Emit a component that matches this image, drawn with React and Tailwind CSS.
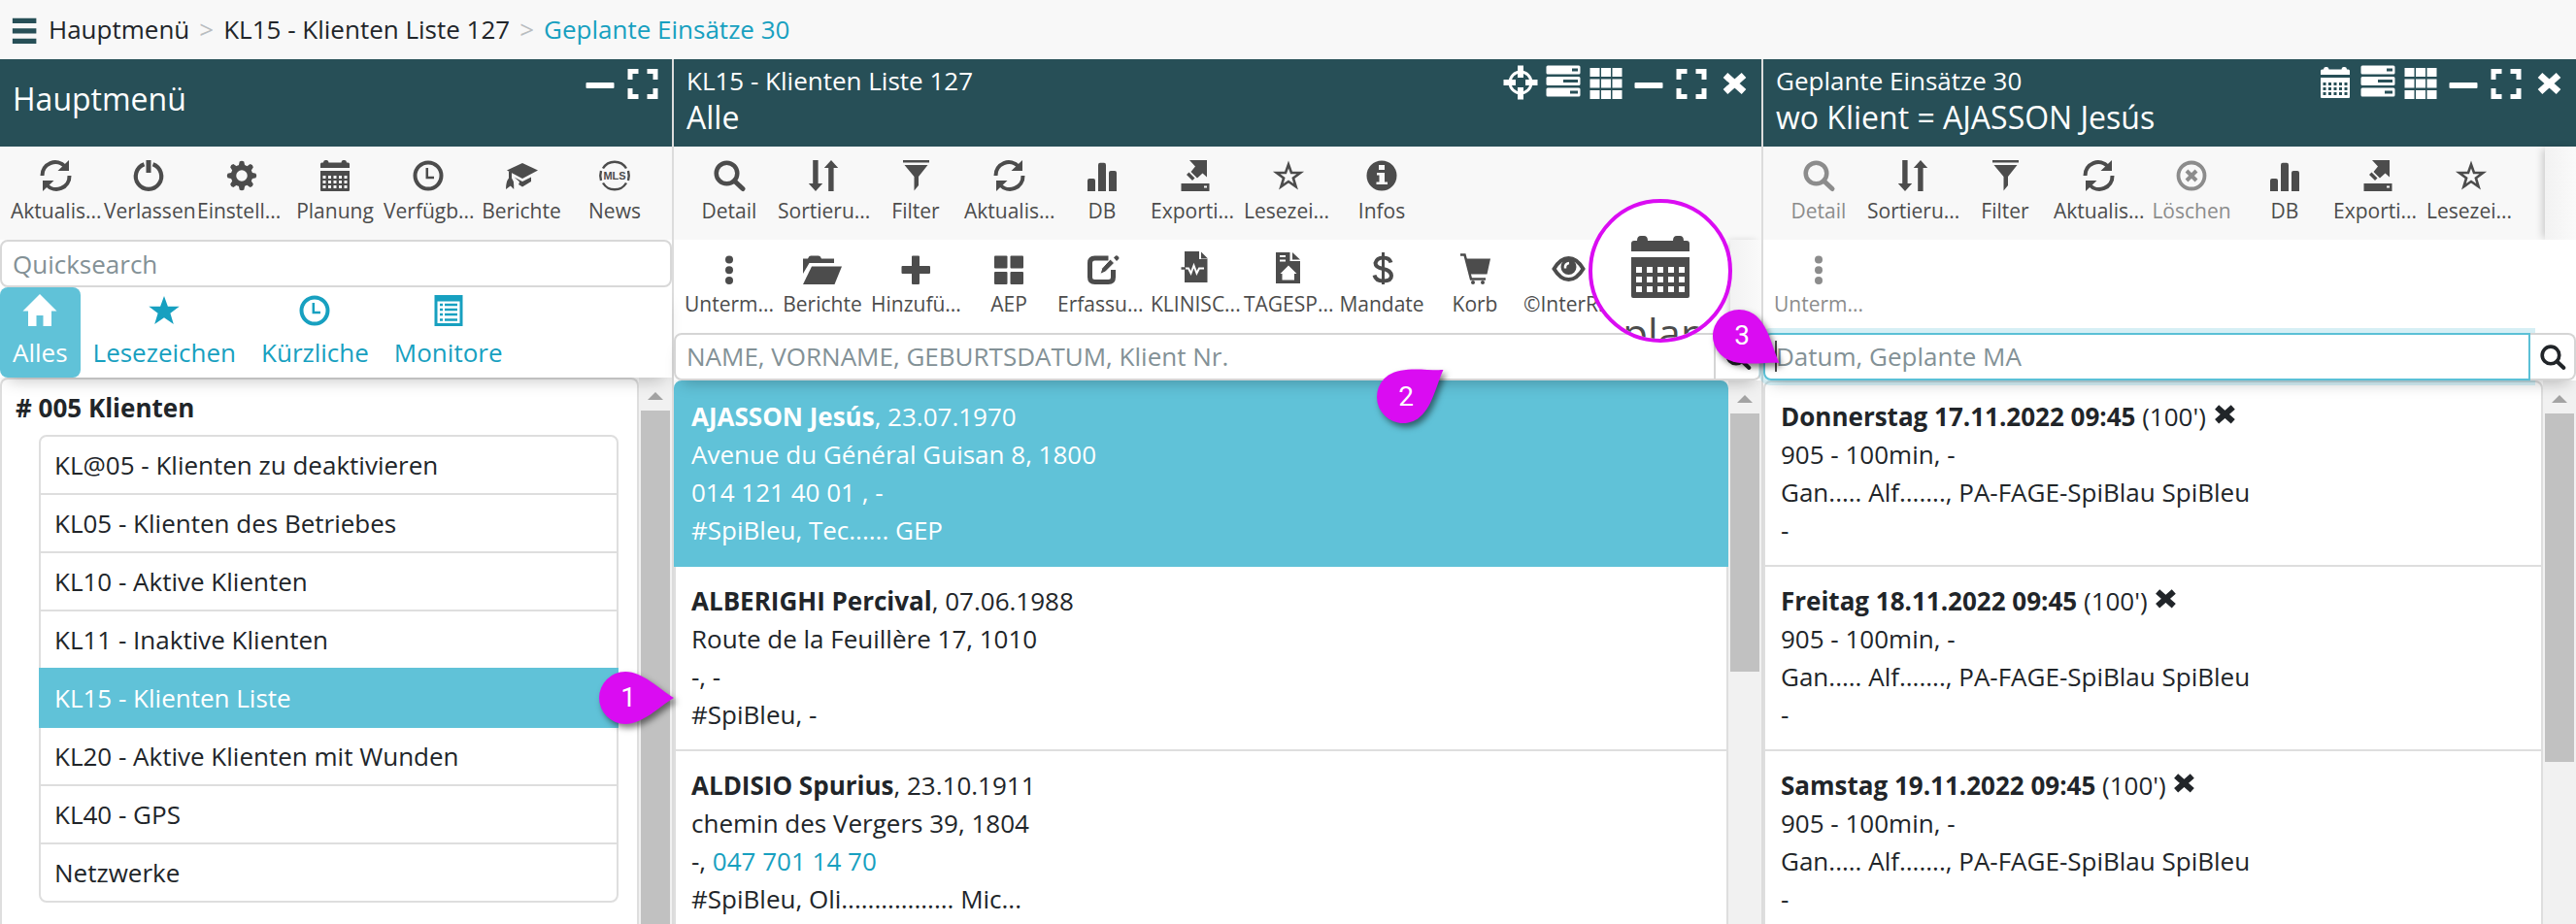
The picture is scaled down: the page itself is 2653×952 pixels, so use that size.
import React from 'react';
import clsx from 'clsx';

// All icons are drawn on the same 32x32 grid and use the current text color
const Icon = ({ className = 'size-8', children }) => (
    <svg
        viewBox="0 0 32 32"
        className={clsx('shrink-0 overflow-visible', className)}
        fill="currentColor"
        aria-hidden="true"
    >
        {children}
    </svg>
);

const RefreshIcon = () => (
    <Icon>
        <path d="M2.5 16A13.5 13.5 0 0 1 26 6.5" fill="none" stroke="currentColor" strokeWidth="4" />
        <path d="M30.5 16A13.5 13.5 0 0 1 7 25.5" fill="none" stroke="currentColor" strokeWidth="4" />
        <path d="M30 0v11H18.5z" />
        <path d="M3 32V21h11.5z" />
    </Icon>
);

const PowerIcon = () => (
    <Icon>
        <path d="M11.5 4.2A13.2 13.2 0 1 0 20.5 4.2" fill="none" stroke="currentColor" strokeWidth="4.2" />
        <path d="M13.5 0h5v13h-5z" />
    </Icon>
);

const GearIcon = () => (
    <Icon>
        <circle cx="16" cy="16" r="8.5" fill="none" stroke="currentColor" strokeWidth="5.5" />
        {[0, 45, 90, 135, 180, 225, 270, 315].map((angle) => (
            <path key={angle} d="M12.5 7l1.2-5.5q2.3-1.5 4.6 0L19.5 7z" transform={`rotate(${angle} 16 16)`} />
        ))}
    </Icon>
);

const CalendarIcon = ({ className }) => (
    <Icon className={className}>
        <path d="M1 8V4q0-1.5 1.5-1.5H4Q4 0 6 0h1.5q2 0 2 2.5h13Q22.5 0 24.5 0H26q2 0 2 2.5h1.5Q31 2.5 31 4v4z" />
        <path
            fillRule="evenodd"
            d="M1 11h30v20q0 1-1 1H2q-1 0-1-1zM3.5 16v3h3v-3zM9 16v3h3v-3zM14.5 16v3h3v-3zM20 16v3h3v-3zM25.5 16v3h3v-3zM3.5 21v3h3v-3zM9 21v3h3v-3zM14.5 21v3h3v-3zM20 21v3h3v-3zM25.5 21v3h3v-3zM3.5 26v3h3v-3zM9 26v3h3v-3zM14.5 26v3h3v-3zM20 26v3h3v-3zM25.5 26v3h3v-3z"
        />
    </Icon>
);

const ClockIcon = () => (
    <Icon>
        <circle cx="16" cy="16" r="13.5" fill="none" stroke="currentColor" strokeWidth="4" />
        <path d="M14.8 8v10H22" fill="none" stroke="currentColor" strokeWidth="2.5" />
    </Icon>
);

const GraduationIcon = () => (
    <Icon>
        <path d="M17 3l16 7.5L17 19 1 10.5z" />
        <path d="M8.5 17.5l8.5 4.5 9-4.5V22l-9 5.5-4-2.5q2-2.5-.5-4z" />
        <path d="M3 12h3v6.5q2.5 3 2.2 7.5v4l-3.4-3.5L0 30q0-8 3-11.5z" />
    </Icon>
);

const MlsIcon = () => (
    <Icon>
        <path
            d="M4 8.5A14 14 0 0 1 28 8.5M28 23.5A14 14 0 0 1 4 23.5M2 11q-1.5 5 0 10M30 11q1.5 5 0 10"
            fill="none"
            stroke="currentColor"
            strokeWidth="2.4"
        />
        <text x="16" y="20" textAnchor="middle" className="font-['Liberation_Sans'] text-[11px] font-bold">MLS</text>
    </Icon>
);

const SearchIcon = ({ className }) => (
    <Icon className={className}>
        <circle cx="13.5" cy="13.5" r="10.8" fill="none" stroke="currentColor" strokeWidth="4.5" />
        <path d="M21.5 21.5l8.5 8" stroke="currentColor" strokeWidth="5" strokeLinecap="round" />
    </Icon>
);

const SortIcon = () => (
    <Icon>
        <path d="M6.2 0h5.4v24h4.6L9 32l-7.2-8h4.4z" />
        <path d="M22.2 32h5.4V8h4.6L25 0l-7.2 8h4.4z" />
    </Icon>
);

const FilterIcon = () => (
    <Icon>
        <path d="M3 0h27v2.6H3zM4.5 5h24L19 17v9l-4.5 5.5V17z" />
    </Icon>
);

const BarsIcon = () => (
    <Icon>
        <path d="M1 32V21q0-2 2-2h4q2 0 2 2v11zM12 32V5q0-2.3 2-2.3h4q2 0 2 2.3v27zM23 32V13q0-2 2-2h4q2 0 2 2v19z" />
    </Icon>
);

const ExportIcon = () => (
    <Icon>
        <path fillRule="evenodd" d="M1.5 24h29v8h-29zM25 26.5v2h3v-2z" />
        <path d="M10 0h18v17.5l-4.5-4-5.5 5-6.5-6.5L16 6.5z" />
        <path d="M9.5 12.5l6 6-2.5 2.5-6-6z" />
    </Icon>
);

const StarOutlineIcon = () => (
    <Icon>
        <path
            d="M16 4.5l3 8.5h9.2l-7.3 5.5 2.7 8.8L16 22l-7.6 5.3 2.7-8.8L3.8 13H13z"
            fill="none"
            stroke="currentColor"
            strokeWidth="2.6"
        />
    </Icon>
);

const StarIcon = () => (
    <Icon>
        <path d="M16 1l3.9 10.8h11.8l-9.3 7L25.8 30 16 23.2 6.2 30l3.4-11.2-9.3-7h11.8z" />
    </Icon>
);

const InfoIcon = () => (
    <Icon>
        <circle cx="16" cy="16" r="15.5" />
        <path d="M13 5h6v5h-6zM11 13h8v9.5h3V25H10.5v-2.5h3v-7H11z" className="fill-[#f8f8f8]" />
    </Icon>
);

const DeleteIcon = () => (
    <Icon>
        <circle cx="16" cy="16" r="13.5" fill="none" stroke="currentColor" strokeWidth="3.8" />
        <path d="M11 11l10 10M21 11L11 21" stroke="currentColor" strokeWidth="4" />
    </Icon>
);

const DotsIcon = () => (
    <Icon>
        <circle cx="16" cy="6.5" r="4" />
        <circle cx="16" cy="17.3" r="4" />
        <circle cx="16" cy="28" r="4" />
    </Icon>
);

const FolderIcon = () => (
    <Icon>
        <path d="M-4 21V5.5h5Q2 2.5 4 2.5h8q2 0 3 3h13V10H2.5z" />
        <path d="M5 13.5h31L28.5 32H-4z" />
    </Icon>
);

const PlusIcon = () => (
    <Icon>
        <path d="M12 3.5q0-1 1-1h6q1 0 1 1V13h10q1 0 1 1v6q0 1-1 1H20v10q0 1-1 1h-6q-1 0-1-1V21H2.5q-1 0-1-1v-6q0-1 1-1H12z" />
    </Icon>
);

const TilesIcon = () => (
    <Icon>
        <rect x="1" y="2.5" width="13.5" height="13" rx="1" />
        <rect x="17.5" y="2.5" width="13.5" height="13" rx="1" />
        <rect x="1" y="19" width="13.5" height="13" rx="1" />
        <rect x="17.5" y="19" width="13.5" height="13" rx="1" />
    </Icon>
);

const EditIcon = () => (
    <Icon>
        <path d="M22.5 5H8.5Q3.5 5 3.5 10v14.5q0 5 5 5h14q5 0 5-5V17" fill="none" stroke="currentColor" strokeWidth="5" />
        <path d="M24.5 6l4 4-9 9-5.5 2.5 1.8-6z" stroke="#fff" strokeWidth="1" />
        <path d="M28 4.5l2-2q1-.8 2.2.2l1 1.2q.8 1-.2 2l-2 2z" />
    </Icon>
);

const PulseFileIcon = () => (
    <Icon>
        <path d="M5-2h15v8h8.5v24H5z" />
        <path d="M22-1.5L29 5.5h-7z" />
        <path d="M1.5 15.5H9l2.5 5 3-8 3 8 2.5-5h5" fill="none" stroke="#fff" strokeWidth="2" />
        <path d="M1.5 15.5H6" stroke="currentColor" strokeWidth="2.5" />
    </Icon>
);

const HomeFileIcon = () => (
    <Icon>
        <path d="M3-1h14.5v9H28v23H3z" />
        <path d="M20-1l8 7.5h-8z" />
        <path d="M7 3h6M7 7.5h6" stroke="#fff" strokeWidth="2" />
        <path d="M16 12.5L24.5 21H22v6.5H9.5V21H7.5z" fill="#fff" />
    </Icon>
);

const DollarIcon = () => (
    <Icon>
        <path
            d="M25.5 9.5Q24 4.5 17.5 4.5T9.5 10q0 4.5 8 6t8.500 7q0 5.500-8.500 5.500-7.500 0-9-6"
            fill="none"
            stroke="currentColor"
            strokeWidth="4"
        />
        <path d="M17.5-1v33" stroke="currentColor" strokeWidth="3" />
    </Icon>
);

const CartIcon = () => (
    <Icon>
        <path d="M1 1.5h4.5L12 26.5h15" fill="none" stroke="currentColor" strokeWidth="2.5" />
        <path d="M6.5 5.5H32l-3.5 16H11z" />
        <circle cx="14" cy="30" r="2" />
        <circle cx="24" cy="30" r="2" />
    </Icon>
);

const EyeIcon = () => (
    <Icon>
        <path
            d="M1.5 16Q8 5 16.5 5t15 11Q25 27 16.5 27T1.5 16z"
            fill="none"
            stroke="currentColor"
            strokeWidth="4"
        />
        <circle cx="16.5" cy="14" r="8" />
        <path d="M17 10q-4.5.5-4 5.5" fill="none" stroke="#fff" strokeWidth="2.5" />
    </Icon>
);

const HomeIcon = () => (
    <Icon>
        <path d="M16-1l17.5 17.5H28V32h-8.5V21h-7v11H4V16.5H-1.5z" />
    </Icon>
);

const ListIcon = () => (
    <Icon>
        <path fillRule="evenodd" d="M1.5 0h29v32h-29zM4.5 6.5v22.5h23V6.5z" />
        <path d="M7 10h3M12 10h13M7 15h3M12 15h13M7 20h3M12 20h13M7 25.5h3M12 25.5h13" stroke="currentColor" strokeWidth="2.5" />
    </Icon>
);

const MenuIcon = () => (
    <Icon className="size-7">
        <path d="M1 2h28v6H1zM1 14h28v6H1zM1 26h28v6H1z" />
    </Icon>
);

const TargetIcon = () => (
    <Icon>
        <circle cx="16" cy="16" r="11" fill="none" stroke="currentColor" strokeWidth="3" />
        <path d="M13-1.5h6V11h-6zM13 21h6v12.5h-6zM-1.5 13H11v6H-1.5zM21 13h12.5v6H21z" />
    </Icon>
);

const ServerIcon = () => (
    <Icon>
        <path
            fillRule="evenodd"
            d="M0-1.5h32q1.5 0 1.5 1.5v6q0 1.5-1.5 1.5H0Q-1.5 7.5-1.5 6V0Q-1.5-1.5 0-1.5zM25 1.5v3h6v-3zM0 10h32q1.5 0 1.5 1.5v6q0 1.5-1.5 1.5H0q-1.5 0-1.5-1.5v-6Q-1.5 10 0 10zM16 13v3h15v-3zM0 21.5h32q1.5 0 1.5 1.5v6q0 1.5-1.5 1.5H0q-1.5 0-1.5-1.5v-6q0-1.5 1.5-1.5zM23 24.5v3h8v-3z"
        />
    </Icon>
);

const GridIcon = () => (
    <Icon>
        <path d="M-.5 1h10v9h-10zM11 1h10v9H11zM22.5 1h10v9h-10zM-.5 12.5h10v9h-10zM11 12.5h10v9H11zM22.5 12.5h10v9h-10zM-.5 24h10v9h-10zM11 24h10v9H11zM22.5 24h10v9h-10z" />
    </Icon>
);

const MinusIcon = () => (
    <Icon>
        <rect x="1.5" y="16" width="29" height="6" rx="1" />
    </Icon>
);

const ExpandIcon = () => (
    <Icon>
        <path d="M.5 13V2h11v5h-6v6zM31.5 13V2h-11v5h6v6zM.5 22v11h11v-5h-6v-6zM31.5 22v11h-11v-5h6v-6z" />
    </Icon>
);

const CloseIcon = ({ className }) => (
    <Icon className={className}>
        <path d="M7 8.5l19 17M26 8.5L7 25.5" stroke="currentColor" strokeWidth="7" />
    </Icon>
);

const MENU_TOOLS = [
    { label: 'Aktualis...', icon: RefreshIcon },
    { label: 'Verlassen', icon: PowerIcon },
    { label: 'Einstell...', icon: GearIcon },
    { label: 'Planung', icon: CalendarIcon },
    { label: 'Verfügb...', icon: ClockIcon },
    { label: 'Berichte', icon: GraduationIcon },
    { label: 'News', icon: MlsIcon },
];

const CLIENT_TOOLS = [
    { label: 'Detail', icon: SearchIcon },
    { label: 'Sortieru...', icon: SortIcon },
    { label: 'Filter', icon: FilterIcon },
    { label: 'Aktualis...', icon: RefreshIcon },
    { label: 'DB', icon: BarsIcon },
    { label: 'Exporti...', icon: ExportIcon },
    { label: 'Lesezei...', icon: StarOutlineIcon },
    { label: 'Infos', icon: InfoIcon },
];

const CLIENT_ACTIONS = [
    { label: 'Unterm...', icon: DotsIcon },
    { label: 'Berichte', icon: FolderIcon },
    { label: 'Hinzufü...', icon: PlusIcon },
    { label: 'AEP', icon: TilesIcon },
    { label: 'Erfassu...', icon: EditIcon },
    { label: 'KLINISC...', icon: PulseFileIcon },
    { label: 'TAGESP...', icon: HomeFileIcon },
    { label: 'Mandate', icon: DollarIcon },
    { label: 'Korb', icon: CartIcon },
    { label: '©InterR...', icon: EyeIcon },
];

const VISIT_TOOLS = [
    { label: 'Detail', icon: SearchIcon, disabled: true },
    { label: 'Sortieru...', icon: SortIcon },
    { label: 'Filter', icon: FilterIcon },
    { label: 'Aktualis...', icon: RefreshIcon },
    { label: 'Löschen', icon: DeleteIcon, disabled: true },
    { label: 'DB', icon: BarsIcon },
    { label: 'Exporti...', icon: ExportIcon },
    { label: 'Lesezei...', icon: StarOutlineIcon },
];

const VISIT_ACTIONS = [{ label: 'Unterm...', icon: DotsIcon, disabled: true }];

const TABS = [
    { label: 'Alles', icon: HomeIcon, active: true },
    { label: 'Lesezeichen', icon: StarIcon },
    { label: 'Kürzliche', icon: ClockIcon },
    { label: 'Monitore', icon: ListIcon },
];

const MENU_ITEMS = [
    'KL@05 - Klienten zu deaktivieren',
    'KL05 - Klienten des Betriebes',
    'KL10 - Aktive Klienten',
    'KL11 - Inaktive Klienten',
    'KL15 - Klienten Liste',
    'KL20 - Aktive Klienten mit Wunden',
    'KL40 - GPS',
    'Netzwerke',
];

const CLIENTS = [
    {
        name: 'AJASSON Jesús',
        born: '23.07.1970',
        address: 'Avenue du Général Guisan 8, 1800',
        contact: '014 121 40 01 , -',
        team: '#SpiBleu, Tec...... GEP',
    },
    {
        name: 'ALBERIGHI Percival',
        born: '07.06.1988',
        address: 'Route de la Feuillère 17, 1010',
        contact: '-, -',
        team: '#SpiBleu, -',
    },
    {
        name: 'ALDISIO Spurius',
        born: '23.10.1911',
        address: 'chemin des Vergers 39, 1804',
        contact: '-, ',
        phone: '047 701 14 70',
        team: '#SpiBleu, Oli................. Mic...',
    },
];

const VISITS = ['Donnerstag 17.11.2022 09:45', 'Freitag 18.11.2022 09:45', 'Samstag 19.11.2022 09:45'];

// Numbered marker. The tip points right and is turned by `angle`
const Pin = ({ number, angle = 0, className }) => (
    <div className={clsx('absolute z-20 size-[54px] text-white', className)}>
        <svg
            viewBox="0 0 54 54"
            className="absolute inset-0 overflow-visible drop-shadow-[3px_4px_3px_rgba(0,0,0,0.5)]"
            aria-hidden="true"
        >
            <path
                d="M77 27C62 18 45 0 27 0a27 27 0 0 0 0 54C45 54 62 36 77 27z"
                fill="#da0cf2"
                transform={`rotate(${angle} 27 27)`}
            />
        </svg>
        <span className="relative flex h-full items-center justify-center pl-1.5 font-['Roboto',sans-serif] text-[28px] leading-8">
            {number}
        </span>
    </div>
);

const PanelHeader = ({ title, subtitle, icons }) => (
    <header
        className={clsx(
            'flex h-[90px] shrink-0 justify-between bg-[#274f57] pl-[13px] text-white',
            subtitle ? 'pr-1.5' : 'pr-2'
        )}
    >
        <div className="pt-[3px]">
            {subtitle ? (
                <>
                    <p className="leading-[39px]">{title}</p>
                    <h2 className="text-[32px] leading-9">{subtitle}</h2>
                </>
            ) : (
                <h2 className="pt-5 text-[32px] leading-9">{title}</h2>
            )}
        </div>
        <div className="flex pt-2">
            {icons.map(([label, IconComponent]) => (
                <button key={label} type="button" aria-label={label} className="flex h-8 w-11 justify-center">
                    <IconComponent />
                </button>
            ))}
        </div>
    </header>
);

const Toolbar = ({ items, className, more }) => (
    <div className={clsx('flex h-24 shrink-0 pl-[9px]', className)}>
        {items.map(({ label, icon: IconComponent, disabled }) => (
            <button
                key={label}
                type="button"
                disabled={disabled}
                className={clsx(
                    'flex w-24 shrink-0 flex-col items-center gap-1 px-0.5 pt-[14px]',
                    disabled ? 'text-[#8c8c8c]' : 'text-[#4c4c4c]'
                )}
            >
                <IconComponent />
                {/* cut labels start at the left edge of their cell */}
                <span
                    className={clsx(
                        'w-full whitespace-nowrap text-[21px] leading-8',
                        label.endsWith('...') ? 'text-left' : 'text-center'
                    )}
                >
                    {label}
                </span>
            </button>
        ))}
        {more && <div className="ml-auto w-8 bg-linear-to-r from-[#f2f2f2] to-[#fafafa] shadow-[-4px_0_8px_-2px_rgba(0,0,0,0.2)]" />}
    </div>
);

const SearchBar = ({ placeholder, focused, children }) => (
    <form
        className="relative z-10 flex h-[49px] shrink-0 shadow-[0_10px_16px_-8px_rgba(0,0,0,0.25)]"
        onSubmit={(e) => e.preventDefault()}
    >
        <input
            type="text"
            aria-label={placeholder}
            placeholder={placeholder}
            className={clsx(
                'min-w-0 flex-1 rounded-l-lg border-2 bg-white px-[11px] outline-none placeholder:text-[#839196]',
                focused
                    ? 'border-[#5bc0d6] shadow-[0_0_0_5px_rgba(91,192,214,0.25)]'
                    : 'border-[#d5d5d5]'
            )}
        />
        <button
            type="submit"
            aria-label="Suchen"
            className="flex w-[47px] items-center justify-center rounded-r-lg border-2 border-l-0 border-[#d5d5d5] bg-white"
        >
            <SearchIcon className="size-[26px]" />
        </button>
        {focused && <span className="absolute left-3 top-2 h-8 w-0.5 bg-[#4c4c4c]" />}
        {children}
    </form>
);

const Scrollbar = ({ thumb }) => (
    <div className="flex w-[34px] shrink-0 flex-col items-center bg-[#f1f1f1]">
        <div className="flex h-[34px] shrink-0 items-center justify-center pt-1">
            <svg viewBox="0 0 16 8" className="h-2 w-4" fill="#a3a3a3" aria-hidden="true">
                <path d="M8 0l8 8H0z" />
            </svg>
        </div>
        <div className={clsx('w-[30px] shrink-0 bg-[#c1c1c1]', thumb)} />
    </div>
);

const MainMenuPanel = () => (
    <section className="flex min-h-0 min-w-0 flex-col border-r-2 border-[#dcdcdc]">
        <PanelHeader title="Hauptmenü" icons={[['Minimieren', MinusIcon], ['Vollbild', ExpandIcon]]} />
        <Toolbar items={MENU_TOOLS} className="bg-[#f8f8f8]" />
        <input
            type="text"
            aria-label="Quicksearch"
            placeholder="Quicksearch"
            className="h-[49px] shrink-0 rounded-lg border-2 border-[#d8d8d8] px-[11px] outline-none placeholder:text-[#839196]"
        />
        <nav className="relative z-10 flex shrink-0 bg-white shadow-[0_10px_16px_-8px_rgba(0,0,0,0.25)]">
            {TABS.map(({ label, icon: IconComponent, active }) => (
                <a
                    key={label}
                    href="#"
                    className={clsx(
                        'flex flex-col items-center gap-2 rounded-lg px-[13px] pb-1.5 pt-2',
                        active ? 'bg-[#60c2d8] text-white' : 'text-[#17a0c0]'
                    )}
                >
                    <IconComponent />
                    <span className="leading-[39px]">{label}</span>
                </a>
            ))}
        </nav>
        <div className="flex min-h-0 flex-1">
            <div className="min-w-0 flex-1 rounded-t-lg border-2 border-b-0 border-[#dedede] pl-[38px] pr-[19px] pt-2.5">
                <h3 className="-ml-6 mb-2 font-bold leading-[39px]"># 005 Klienten</h3>
                <ul className="rounded-lg border-2 border-[#dedede]">
                    {MENU_ITEMS.map((item, i) => (
                        <li
                            key={item}
                            className={clsx(
                                'relative',
                                i === 4 && '-mx-0.5 -mt-0.5 border-x-2 border-t-2 border-[#60c2d8] bg-[#60c2d8] text-white',
                                i !== MENU_ITEMS.length - 1 && 'border-b-2',
                                i !== 4 && 'border-[#dedede]'
                            )}
                        >
                            <a href="#" className="flex h-[58px] items-center px-[14px]">{item}</a>
                            {i === 4 && <Pin number={1} className="-right-9 top-0.5" />}
                        </li>
                    ))}
                </ul>
            </div>
            <Scrollbar thumb="flex-1" />
        </div>
    </section>
);

const ClientsPanel = () => (
    <section className="relative flex min-h-0 min-w-0 flex-col border-r-2 border-[#dcdcdc]">
        <PanelHeader
            title="KL15 - Klienten Liste 127"
            subtitle="Alle"
            icons={[
                ['Zentrieren', TargetIcon],
                ['Server', ServerIcon],
                ['Raster', GridIcon],
                ['Minimieren', MinusIcon],
                ['Vollbild', ExpandIcon],
                ['Schliessen', CloseIcon],
            ]}
        />
        <Toolbar items={CLIENT_TOOLS} className="bg-[#f8f8f8]" />
        <Toolbar items={CLIENT_ACTIONS} className="bg-white" more />
        <SearchBar placeholder="NAME, VORNAME, GEBURTSDATUM, Klient Nr." />
        <div className="flex min-h-0 flex-1">
            <ul className="min-w-0 flex-1">
                {CLIENTS.map((client, i) => (
                    <li
                        key={client.name}
                        className={clsx(
                            'relative border-x-2 border-b-2 px-4 pb-4 pt-4 leading-[39px]',
                            i === 0 ? 'rounded-t-lg border-t-2 border-[#60c2d8] bg-[#60c2d8] text-white' : 'border-[#dedede]'
                        )}
                    >
                        <p><strong>{client.name}</strong>, {client.born}</p>
                        <p>{client.address}</p>
                        <p>
                            {client.contact}
                            {client.phone && <a href="tel:0477011470" className="text-[#17a0c0]">{client.phone}</a>}
                        </p>
                        <p>{client.team}</p>
                        {i === 0 && <Pin number={2} angle={-34} className="-top-3 right-[306px]" />}
                    </li>
                ))}
            </ul>
            <Scrollbar thumb="h-[266px]" />
        </div>
        {/* magnified toolbar button */}
        <div className="absolute right-[30px] top-36 z-10 flex size-[148px] flex-col items-center overflow-hidden rounded-full border-4 border-[#da0cf2] bg-white pt-[34px] text-[#4c4c4c]">
            <CalendarIcon className="size-16" />
            <span className="pl-2 text-[42px] leading-[72px]">plan</span>
        </div>
    </section>
);

const VisitsPanel = () => (
    <section className="flex min-h-0 min-w-0 flex-col">
        <PanelHeader
            title="Geplante Einsätze 30"
            subtitle="wo Klient = AJASSON Jesús"
            icons={[
                ['Kalender', CalendarIcon],
                ['Server', ServerIcon],
                ['Raster', GridIcon],
                ['Minimieren', MinusIcon],
                ['Vollbild', ExpandIcon],
                ['Schliessen', CloseIcon],
            ]}
        />
        <Toolbar items={VISIT_TOOLS} className="bg-[#f8f8f8]" more />
        <Toolbar items={VISIT_ACTIONS} className="bg-white" />
        <SearchBar placeholder="Datum, Geplante MA" focused>
            <Pin number={3} angle={34} className="-left-[52px] -top-6" />
        </SearchBar>
        <div className="flex min-h-0 flex-1">
            <ul className="min-w-0 flex-1">
                {VISITS.map((visit, i) => (
                    <li
                        key={visit}
                        className={clsx(
                            'border-x-2 border-b-2 border-[#dedede] px-4 pb-4 pt-4 leading-[39px]',
                            i === 0 && 'rounded-t-lg border-t-2'
                        )}
                    >
                        <p>
                            <strong>{visit}</strong> (100') <CloseIcon className="-ml-0.5 -mt-3 inline size-7" />
                        </p>
                        <p>905 - 100min, -</p>
                        <p>Gan..... Alf......., PA-FAGE-SpiBlau SpiBleu</p>
                        <p>-</p>
                    </li>
                ))}
            </ul>
            <Scrollbar thumb="h-[359px]" />
        </div>
    </section>
);

const App = () => {
    return (
        <div className="flex h-screen flex-col overflow-hidden bg-white font-['Open_Sans',sans-serif] text-[26px] text-[#212529]">
            <nav className="flex h-[61px] shrink-0 items-center gap-2.5 bg-[#f8f8f8] pl-3">
                <button type="button" aria-label="Menü" className="text-[#274f57]">
                    <MenuIcon />
                </button>
                <a href="#">Hauptmenü</a>
                <span className="text-[#b9bdc0]">&gt;</span>
                <a href="#">KL15 - Klienten Liste 127</a>
                <span className="text-[#b9bdc0]">&gt;</span>
                <a href="#" className="text-[#17a0c0]">Geplante Einsätze 30</a>
            </nav>
            <main className="grid min-h-0 flex-1 grid-cols-[694fr_1122fr_837fr]">
                <MainMenuPanel />
                <ClientsPanel />
                <VisitsPanel />
            </main>
        </div>
    );
};

export default App;
